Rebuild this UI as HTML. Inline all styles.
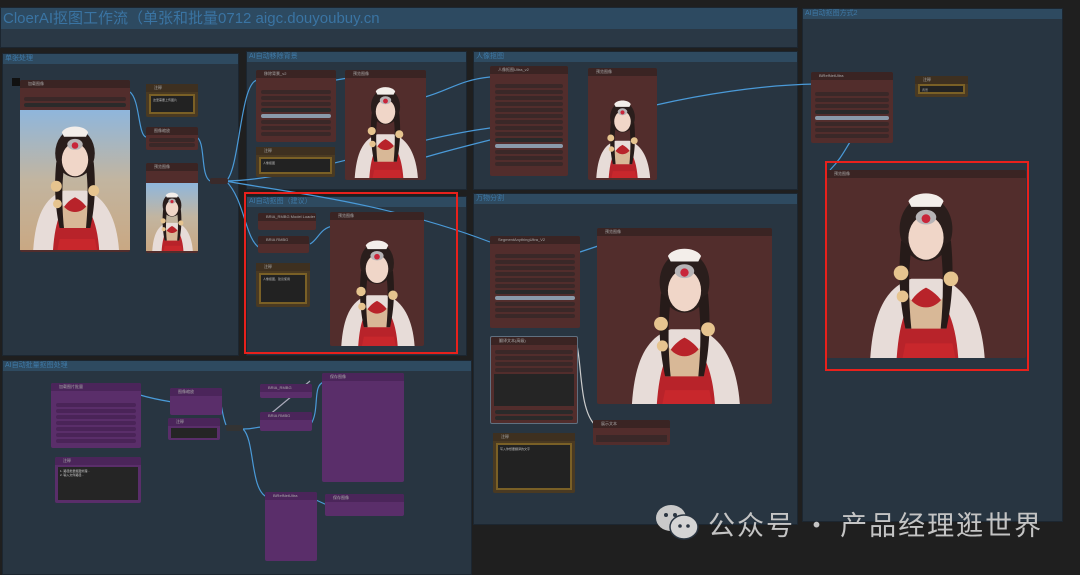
<!DOCTYPE html>
<html><head><meta charset="utf-8"><style>
*{margin:0;padding:0;box-sizing:border-box}
body{width:1080px;height:569px;background:#1f1f1f;position:relative;overflow:hidden;font-family:"Liberation Sans","Noto Sans CJK SC",sans-serif}
.g{position:absolute;background:#283541;border:1px solid #1c2630}
.gh{position:absolute;left:0;right:0;top:0;height:10px;background:#2e4a60;color:#3f7aa8;font-size:7px;line-height:10px;padding-left:2px}
.n{position:absolute;background:#522d2c;border-radius:2px}
.n .t{height:8px;background:#3a2423;border-radius:2px 2px 0 0;color:#aaa;font-size:4px;line-height:8px;padding-left:8px}
.p{background:#5a2e6a}.p .t{background:#4b255a}
.note{position:absolute;background:#4a3a22;border-radius:2px}
.note .t{height:8px;background:#3e3020;color:#aaa;font-size:4px;line-height:8px;padding-left:8px}
.note .b{position:absolute;left:3px;right:3px;top:10px;bottom:3px;background:#222;border:2px solid #7a6026;color:#bbb;font-size:3px;padding:2px}
.w{position:absolute;height:4px;background:#3a2828;border-radius:2px}
.red{position:absolute;border:2px solid #e8211c}
.id{position:absolute;width:8px;height:8px;background:#111}
</style></head><body>
<svg width="0" height="0" style="position:absolute"><defs>
<symbol id="girl" viewBox="0 0 100 120" preserveAspectRatio="xMidYMax meet">
<path d="M12 120 C14 90 22 72 40 66 L60 66 C78 72 88 92 90 120Z" fill="#e7dcd8"/>
<path d="M30 120 C32 92 38 78 50 72 C62 78 70 92 72 120Z" fill="#b8232a"/>
<path d="M36 110 L68 110 L70 120 L34 120Z" fill="#c8272c"/>
<path d="M38 78 C44 88 56 88 62 78 L64 100 L36 100Z" fill="#d8b897"/>
<ellipse cx="50" cy="32" rx="18" ry="22" fill="#2a1e1c"/>
<path d="M33 40 C30 70 34 90 36 100 L40 100 C38 80 38 60 40 45Z" fill="#261b19"/>
<path d="M67 40 C70 70 66 90 64 100 L60 100 C62 80 62 60 60 45Z" fill="#261b19"/>
<ellipse cx="50" cy="38" rx="12" ry="15" fill="#f0d6c8"/>
<path d="M38 13 C42 6 58 6 62 13 L60 17 L40 17Z" fill="#f3eeea"/>
<ellipse cx="50" cy="24" rx="7" ry="5" fill="#b7b4b6"/>
<circle cx="50" cy="25" r="3" fill="#c8263a"/>
<circle cx="33" cy="62" r="5" fill="#e6c48f"/><circle cx="67" cy="66" r="5" fill="#e6c48f"/><circle cx="34" cy="78" r="4" fill="#e6c48f"/>
</symbol></defs></svg>

<div class="g" style="left:0;top:7px;width:798px;height:41px;background:#2a3845"><div class="gh" style="height:21px;font-size:15px;line-height:21px;color:#3a74a3;background:#2d4a61">CloerAI抠图工作流（单张和批量0712 aigc.douyoubuy.cn</div></div>

<div class="g" style="left:802px;top:8px;width:261px;height:514px"><div class="gh">AI自动抠图方式2</div></div>
<div class="g" style="left:2px;top:53px;width:237px;height:303px"><div class="gh">单张处理</div></div>
<div class="g" style="left:246px;top:51px;width:221px;height:139px"><div class="gh">AI自动移除背景</div></div>
<div class="g" style="left:473px;top:51px;width:325px;height:139px"><div class="gh">人像抠图</div></div>
<div class="g" style="left:246px;top:196px;width:221px;height:160px"><div class="gh">AI自动抠图（建议）</div></div>
<div class="g" style="left:473px;top:193px;width:325px;height:332px"><div class="gh">万物分割</div></div>
<div class="g" style="left:2px;top:360px;width:470px;height:215px"><div class="gh">AI自动批量抠图处理</div></div>

<svg style="position:absolute;left:0;top:0" width="1080" height="569" fill="none" stroke="#4a9ad8" stroke-width="1.2">
<path d="M130 92 C140 100 138 135 146 137"/><path d="M196 137 C206 140 200 175 210 181"/>
<path d="M226 181 C240 170 240 80 258 80"/><path d="M226 181 C270 190 380 200 490 242"/>
<path d="M226 181 C245 200 245 240 260 248"/><path d="M226 181 C300 180 400 140 490 128"/>
<path d="M336 80 L348 78"/><path d="M425 97 C450 90 460 80 490 77"/><path d="M426 157 C450 150 470 145 490 140"/>
<path d="M656 105 C700 95 760 85 815 84"/><path d="M310 244 C318 240 320 228 333 226"/>
<path d="M580 252 L598 246"/><path d="M850 142 C845 150 840 160 830 170"/>
<path d="M140 395 C150 398 160 400 172 402"/><path d="M219 397 C222 405 222 415 226 425"/>
<path d="M243 429 C255 429 255 427 262 427"/><path d="M243 429 C255 440 250 490 267 497"/>
<path d="M311 424 C320 410 312 385 324 382"/><path d="M316 500 L327 505"/>
<path d="M577 345 C582 370 580 410 595 425" stroke="#ccc"/>
<path d="M310 381 L262 421" stroke="#aab"/>
</svg>

<div class="id" style="left:12px;top:78px"></div>
<div class="n" style="left:20px;top:80px;width:110px;height:172px"><div class="t">加载图像</div>
<div class="w" style="left:4px;top:17px;right:4px"></div><div class="w" style="left:4px;top:23px;right:4px;background:#2a2a2a"></div>
<svg style="position:absolute;left:0;top:30px" width="110" height="140"><defs><linearGradient id="sky" x1="0" y1="0" x2="0" y2="1"><stop offset="0" stop-color="#8fb6dc"/><stop offset=".5" stop-color="#c2b5a0"/><stop offset="1" stop-color="#c9a883"/></linearGradient></defs><rect width="110" height="140" fill="url(#sky)"/><use href="#girl" x="0" y="0" width="110" height="140"/></svg></div>
<div class="note" style="left:146px;top:84px;width:52px;height:33px"><div class="t">注释</div><div class="b">这里需要上传图片</div></div>
<div class="n" style="left:146px;top:127px;width:52px;height:23px"><div class="t">图像缩放</div><div class="w" style="left:3px;top:11px;right:3px"></div><div class="w" style="left:3px;top:16px;right:3px"></div></div>
<div class="n" style="left:146px;top:163px;width:52px;height:90px"><div class="t">预览图像</div>
<svg style="position:absolute;left:0;top:20px" width="52" height="68"><rect width="52" height="68" fill="url(#sky)"/><use href="#girl" width="52" height="68"/></svg></div>
<div class="n" style="left:210px;top:178px;width:18px;height:6px;background:#3a2a2a"></div>

<div class="n" style="left:256px;top:70px;width:80px;height:72px"><div class="t">移除背景_v2</div>
<div class="w" style="left:5px;top:20px;right:5px"></div><div class="w" style="left:5px;top:26px;right:5px"></div><div class="w" style="left:5px;top:32px;right:5px"></div><div class="w" style="left:5px;top:38px;right:5px;background:#2a2a2a"></div><div class="w" style="left:5px;top:44px;right:5px;background:#8a9aaa"></div><div class="w" style="left:5px;top:50px;right:5px"></div><div class="w" style="left:5px;top:56px;right:5px"></div><div class="w" style="left:5px;top:62px;right:5px"></div></div>
<div class="note" style="left:256px;top:147px;width:79px;height:30px"><div class="t">注释</div><div class="b">人像抠图</div></div>
<div class="n" style="left:345px;top:70px;width:81px;height:110px"><div class="t">预览图像</div><svg style="position:absolute;left:0;top:10px" width="81" height="98"><use href="#girl" width="81" height="98"/></svg></div>

<div class="n" style="left:490px;top:66px;width:78px;height:110px"><div class="t">人像抠图Ultra_v2</div>
<div class="w" style="left:5px;top:18px;right:5px"></div><div class="w" style="left:5px;top:24px;right:5px"></div><div class="w" style="left:5px;top:30px;right:5px"></div><div class="w" style="left:5px;top:36px;right:5px"></div><div class="w" style="left:5px;top:42px;right:5px"></div><div class="w" style="left:5px;top:48px;right:5px"></div><div class="w" style="left:5px;top:54px;right:5px"></div><div class="w" style="left:5px;top:60px;right:5px"></div><div class="w" style="left:5px;top:66px;right:5px"></div><div class="w" style="left:5px;top:72px;right:5px;background:#2a2a2a"></div><div class="w" style="left:5px;top:78px;right:5px;background:#8a9aaa"></div><div class="w" style="left:5px;top:84px;right:5px"></div><div class="w" style="left:5px;top:90px;right:5px"></div><div class="w" style="left:5px;top:96px;right:5px"></div></div>
<div class="n" style="left:588px;top:68px;width:69px;height:112px"><div class="t">预览图像</div><svg style="position:absolute;left:0;top:14px" width="69" height="96"><use href="#girl" width="69" height="96"/></svg></div>

<div class="n" style="left:258px;top:213px;width:58px;height:17px"><div class="t">BRIA_RMBG Model Loader</div></div>
<div class="n" style="left:258px;top:236px;width:51px;height:17px"><div class="t">BRIA RMBG</div></div>
<div class="note" style="left:256px;top:263px;width:54px;height:44px"><div class="t">注释</div><div class="b">人像抠图，建议使用</div></div>
<div class="n" style="left:330px;top:212px;width:94px;height:134px"><div class="t">预览图像</div><svg style="position:absolute;left:0;top:10px" width="94" height="124"><use href="#girl" width="94" height="124"/></svg></div>
<div class="red" style="left:244px;top:192px;width:214px;height:162px"></div>

<div class="n" style="left:490px;top:236px;width:90px;height:92px"><div class="t">SegmentAnythingUltra_V2</div>
<div class="w" style="left:5px;top:18px;right:5px"></div><div class="w" style="left:5px;top:24px;right:5px"></div><div class="w" style="left:5px;top:30px;right:5px"></div><div class="w" style="left:5px;top:36px;right:5px"></div><div class="w" style="left:5px;top:42px;right:5px"></div><div class="w" style="left:5px;top:48px;right:5px"></div><div class="w" style="left:5px;top:54px;right:5px;background:#2a2a2a"></div><div class="w" style="left:5px;top:60px;right:5px;background:#8a9aaa"></div><div class="w" style="left:5px;top:66px;right:5px"></div><div class="w" style="left:5px;top:72px;right:5px"></div><div class="w" style="left:5px;top:78px;right:5px"></div></div>
<div class="n" style="left:597px;top:228px;width:175px;height:176px"><div class="t">预览图像</div><svg style="position:absolute;left:0;top:10px" width="175" height="166"><use href="#girl" width="175" height="166"/></svg></div>
<div class="n" style="left:490px;top:336px;width:88px;height:88px;border:1px solid #607080"><div class="t">翻译文本(高级)</div>
<div class="w" style="left:4px;top:13px;right:4px"></div><div class="w" style="left:4px;top:19px;right:4px"></div><div class="w" style="left:4px;top:25px;right:4px"></div><div class="w" style="left:4px;top:31px;right:4px"></div>
<div style="position:absolute;left:3px;right:3px;top:37px;height:32px;background:#252525"></div><div class="w" style="left:4px;top:73px;right:4px;background:#2a2a2a"></div><div class="w" style="left:4px;top:79px;right:4px;background:#2a2a2a"></div></div>
<div class="note" style="left:493px;top:433px;width:82px;height:60px"><div class="t">注释</div><div class="b">写入你想要翻译的文字</div></div>
<div class="n" style="left:593px;top:420px;width:77px;height:25px"><div class="t">展示文本</div><div style="position:absolute;left:3px;right:3px;top:15px;height:7px;background:#3a2828"></div></div>

<div class="n" style="left:811px;top:72px;width:82px;height:71px"><div class="t">BiRefNetUltra</div>
<div class="w" style="left:4px;top:20px;right:4px"></div><div class="w" style="left:4px;top:26px;right:4px"></div><div class="w" style="left:4px;top:32px;right:4px"></div><div class="w" style="left:4px;top:38px;right:4px;background:#2a2a2a"></div><div class="w" style="left:4px;top:44px;right:4px;background:#8a9aaa"></div><div class="w" style="left:4px;top:50px;right:4px"></div><div class="w" style="left:4px;top:56px;right:4px"></div><div class="w" style="left:4px;top:62px;right:4px"></div></div>
<div class="note" style="left:915px;top:76px;width:53px;height:21px"><div class="t">注释</div><div class="b" style="top:8px">背景</div></div>
<div class="n" style="left:826px;top:170px;width:200px;height:188px"><div class="t">预览图像</div><svg style="position:absolute;left:0;top:12px" width="200" height="176"><use href="#girl" width="200" height="176"/></svg></div>
<div class="red" style="left:825px;top:161px;width:204px;height:210px"></div>

<div class="n p" style="left:51px;top:383px;width:90px;height:65px"><div class="t">加载图片批量</div>
<div class="w" style="left:5px;top:20px;right:5px;background:#4a2458"></div><div class="w" style="left:5px;top:26px;right:5px;background:#4a2458"></div><div class="w" style="left:5px;top:32px;right:5px;background:#4a2458"></div><div class="w" style="left:5px;top:38px;right:5px;background:#4a2458"></div><div class="w" style="left:5px;top:44px;right:5px;background:#4a2458"></div><div class="w" style="left:5px;top:50px;right:5px;background:#4a2458"></div><div class="w" style="left:5px;top:56px;right:5px;background:#4a2458"></div></div>
<div class="n p" style="left:55px;top:457px;width:86px;height:46px"><div class="t">注释</div><div style="position:absolute;left:3px;right:3px;top:10px;bottom:3px;background:#252525;color:#ccc;font-size:3px;padding:2px">1. 路径批量抠图处理…<br>2. 输入文件路径…</div></div>
<div class="n p" style="left:170px;top:388px;width:52px;height:27px"><div class="t">图像缩放</div></div>
<div class="n p" style="left:168px;top:418px;width:52px;height:22px"><div class="t">注释</div><div style="position:absolute;left:3px;right:3px;top:10px;bottom:2px;background:#252525"></div></div>
<div class="n" style="left:226px;top:425px;width:17px;height:6px;background:#333"></div>
<div class="n p" style="left:260px;top:384px;width:52px;height:14px"><div class="t">BRIA_RMBG</div></div>
<div class="n p" style="left:260px;top:412px;width:52px;height:19px"><div class="t">BRIA RMBG</div></div>
<div class="n p" style="left:322px;top:373px;width:82px;height:109px"><div class="t">保存图像</div></div>
<div class="n p" style="left:265px;top:492px;width:52px;height:69px"><div class="t">BiRefNetUltra</div></div>
<div class="n p" style="left:325px;top:494px;width:79px;height:22px"><div class="t">保存图像</div></div>

<svg style="position:absolute;left:655px;top:503px" width="44" height="38" viewBox="0 0 44 38"><ellipse cx="16" cy="15" rx="15" ry="13" fill="#c9c9c9"/><ellipse cx="29" cy="24" rx="14" ry="12" fill="#d4d4d4" stroke="#2a3541" stroke-width="1.5"/><circle cx="11" cy="12" r="2" fill="#2a3541"/><circle cx="20" cy="12" r="2" fill="#2a3541"/><circle cx="25" cy="23" r="1.8" fill="#2a3541"/><circle cx="33" cy="23" r="1.8" fill="#2a3541"/></svg>
<div style="position:absolute;left:708px;top:507px;color:#c4c4c4;font-size:27px;line-height:34px;font-family:'Noto Sans CJK SC',sans-serif;letter-spacing:2px;white-space:nowrap">公众号 · 产品经理逛世界</div>
</body></html>
